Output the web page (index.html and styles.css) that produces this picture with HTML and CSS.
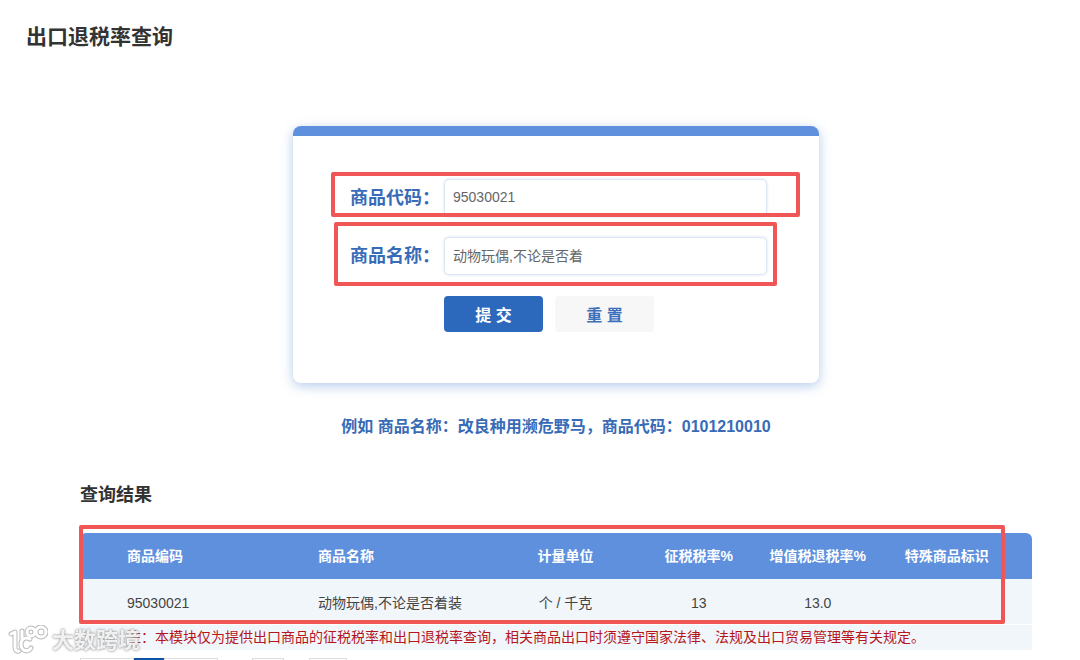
FILE: index.html
```html
<!DOCTYPE html>
<html lang="zh-CN">
<head>
<meta charset="UTF-8">
<meta name="viewport" content="width=device-width, initial-scale=1">
<title>出口退税率查询</title>
<link rel="stylesheet" href="styles.css">
</head>
<body>
<h1 class="page-title">出口退税率查询</h1>

<main class="content">
  <form class="card">
    <div class="field">
      <label for="code">商品代码：</label>
      <input type="text" id="code" name="code" value="95030021">
      <span class="mark mark-code"></span>
    </div>
    <div class="field">
      <label for="name">商品名称：</label>
      <input type="text" id="name" name="name" value="动物玩偶,不论是否着">
      <span class="mark mark-name"></span>
    </div>
    <div class="buttons">
      <button type="submit" class="btn btn-submit">提 交</button>
      <button type="reset" class="btn btn-reset">重 置</button>
    </div>
  </form>

  <p class="example">例如 商品名称：改良种用濒危野马，商品代码：0101210010</p>

  <h2 class="result-title">查询结果</h2>
  <div class="result">
    <table class="result-table">
      <thead>
        <tr>
          <th class="col-code">商品编码</th>
          <th class="col-name">商品名称</th>
          <th class="col-unit">计量单位</th>
          <th class="col-tax">征税税率%</th>
          <th class="col-refund">增值税退税率%</th>
          <th class="col-flag">特殊商品标识</th>
        </tr>
      </thead>
      <tbody>
        <tr>
          <td class="col-code">95030021</td>
          <td class="col-name">动物玩偶,不论是否着装</td>
          <td>个 / 千克</td>
          <td>13</td>
          <td>13.0</td>
          <td class="col-flag"></td>
        </tr>
      </tbody>
    </table>
    <span class="mark mark-table"></span>
  </div>
  <p class="note">注：本模块仅为提供出口商品的征税税率和出口退税率查询，相关商品出口时须遵守国家法律、法规及出口贸易管理等有关规定。</p>

  <div class="pager">
    <button type="button" class="page-prev" aria-label="上一页"></button>
    <button type="button" class="page-current" aria-label="当前页"></button>
    <button type="button" class="page-next" aria-label="下一页"></button>
    <input type="text" class="page-input" aria-label="页码">
    <button type="button" class="page-go" aria-label="跳转"></button>
  </div>
</main>

<div class="watermark">
  <svg width="40" height="32" viewBox="0 0 40 32" fill="none" stroke-linecap="round" stroke-linejoin="round">
    <g class="logo-edge">
      <path d="M3 9 L7 7 V22 Q7 27 11 26"/>
      <path d="M14 6 V16 M22 14 C17 11 13 15 13 19 C13 26 20 28 23 23"/>
      <circle cx="23" cy="7" r="4"/>
      <circle cx="33" cy="7" r="5"/>
    </g>
    <g class="logo-line">
      <path d="M3 9 L7 7 V22 Q7 27 11 26"/>
      <path d="M14 6 V16 M22 14 C17 11 13 15 13 19 C13 26 20 28 23 23"/>
      <circle cx="23" cy="7" r="4"/>
      <circle cx="33" cy="7" r="5"/>
    </g>
  </svg>
  <span>大数跨境</span>
</div>
</body>
</html>
```

FILE: styles.css
```css
* {
  box-sizing: border-box;
}

html {
  scrollbar-width: none;
}

body {
  margin: 0;
  background: #fff;
  color: #333;
  font-family: "Liberation Sans", "Noto Sans CJK SC", sans-serif;
  font-size: 14px;
}

.page-title {
  margin: 0;
  padding: 21px 26px 0;
  font-size: 21px;
  line-height: 32px;
}

.content {
  padding: 73px 48px 0 80px;
}

/* search form */
.card {
  width: 55%;
  min-width: 526px;
  margin: 0 auto;
  padding: 43px 52px 51px 57px;
  border-top: 10px solid #5e90de;
  border-radius: 8px;
  box-shadow: 0 3px 12px rgba(70, 125, 205, 0.4);
}

.field {
  position: relative;
  display: flex;
  align-items: center;
  margin-bottom: 20px;
}

.field label {
  width: 94px;
  color: #386bb7;
  font-size: 18px;
  font-weight: bold;
  line-height: 38px;
  white-space: nowrap;
}

.field input {
  flex: 1;
  min-width: 0;
  height: 38px;
  padding: 0 8px 2px;
  border: 1px solid #dce6f5;
  border-radius: 5px;
  box-shadow: 0 0 3px rgba(70, 125, 205, 0.2);
  background: #fff;
  color: #666;
  font-family: inherit;
  font-size: 14px;
}

.buttons {
  display: flex;
  gap: 12px;
  padding: 1px 0 0 94px;
}

.btn {
  width: 99px;
  height: 36px;
  padding: 0;
  border: 0;
  border-radius: 4px;
  font-family: inherit;
  font-size: 16px;
  font-weight: bold;
}

.btn-submit {
  background: #2c69bd;
  color: #fff;
}

.btn-reset {
  background: #f7f7f7;
  color: #3e70bb;
}

/* red frames drawn over the page */
.mark {
  position: absolute;
  border: 4px solid #f15656;
  border-radius: 2px;
  pointer-events: none;
}

.mark-code {
  top: -7px;
  right: -33px;
  bottom: 0;
  left: -19px;
}

.mark-name {
  top: -15px;
  right: -10px;
  bottom: -11px;
  left: -16px;
}

.mark-table {
  top: -8px;
  right: 27px;
  bottom: 0;
  left: -1px;
}

.example {
  margin: 32px 0 0;
  color: #386bb7;
  font-size: 16px;
  font-weight: bold;
  line-height: 24px;
  text-align: center;
}

/* result table */
.result-title {
  margin: 42px 0 24px;
  font-size: 18px;
  line-height: 28px;
}

.result {
  position: relative;
}

.result-table {
  width: 100%;
  border-collapse: separate;
  border-spacing: 0;
  table-layout: fixed;
}

.result-table th,
.result-table td {
  padding: 0;
  text-align: center;
  line-height: 20px;
}

.result-table th {
  height: 46px;
  background: #5e90de;
  color: #fff;
}

.result-table td {
  height: 45px;
  padding-top: 2px;
  background: #f1f6fb;
  color: #444;
}

.result-table th:first-child {
  border-radius: 6px 0 0 0;
}

.result-table th:last-child {
  border-radius: 0 6px 0 0;
}

.result-table .col-code {
  width: 25%;
  padding-left: 47px;
  text-align: left;
}

.result-table .col-name {
  width: 18%;
  text-align: left;
}

.result-table .col-unit {
  width: 16%;
}

.result-table .col-tax {
  width: 12%;
}

.result-table .col-refund {
  width: 13%;
}

.result-table .col-flag {
  width: 16%;
  padding-right: 18px;
}

.note {
  margin: 1px 0 8px;
  padding-left: 47px;
  background: #f1f6fb;
  color: #b5161b;
  line-height: 25px;
}

/* paging */
.pager {
  display: flex;
  height: 30px;
}

.pager button,
.pager input {
  height: 30px;
  padding: 0;
  border: 1px solid #ddd;
  border-radius: 0;
  background: #fff;
}

.pager .page-prev,
.pager .page-next {
  width: 54px;
}

.pager .page-current {
  width: 30px;
  border-color: #0e53a7;
  background: #0e53a7;
}

.pager .page-input {
  width: 32px;
  margin: 0 25px 0 34px;
}

.pager .page-go {
  width: 38px;
}

.watermark {
  position: fixed;
  bottom: 3px;
  left: 8px;
  display: flex;
  align-items: center;
  gap: 4px;
  color: rgba(255, 255, 255, 0.85);
  font-size: 22px;
  font-weight: bold;
  line-height: 32px;
  text-shadow: 0 0 2px #999, 0 0 3px #aaa;
}

.logo-edge {
  stroke: #bbb;
  stroke-width: 5;
}

.logo-line {
  stroke: #fff;
  stroke-width: 3;
}
```
